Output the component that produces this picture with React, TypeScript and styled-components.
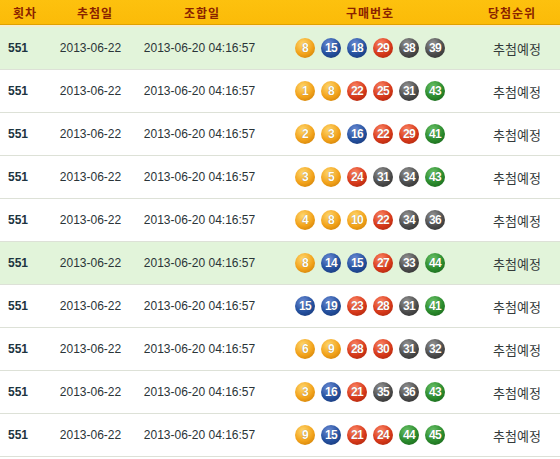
import React from "react";
import styled, { createGlobalStyle } from "styled-components";

const GlobalStyle = createGlobalStyle`
  html, body {
    margin: 0;
    padding: 0;
    background: #ffffff;
  }
  body {
    font-family: "Liberation Sans", "Noto Sans CJK KR", sans-serif;
  }
`;

// 회차 / 추첨일 / 조합일 / 구매번호 / 당첨순위
const COLS = "50px 90px 120px 220px 1fr";

const Table = styled.div`
  width: 560px;
  display: flex;
  flex-direction: column;
`;

const Header = styled.div`
  display: grid;
  grid-template-columns: ${COLS};
  align-items: center;
  height: 24px;
  background: linear-gradient(#fdc10e, #fbbb08);
  border-bottom: 1px solid #e0a100;
  box-shadow: 0 2px 0 #f4edd0;
  margin-bottom: 2px;
`;

const HeadCell = styled.div<{ $pl?: number; $pr?: number }>`
  text-align: center;
  padding-left: ${(p) => p.$pl ?? 0}px;
  padding-right: ${(p) => p.$pr ?? 0}px;
  font-family: "Noto Sans CJK KR", sans-serif;
  font-size: 12px;
  font-weight: 700;
  color: #8a2200;
  letter-spacing: 1px;
`;

const Row = styled.div<{ $hl?: boolean }>`
  display: grid;
  grid-template-columns: ${COLS};
  align-items: center;
  height: 42px;
  background: ${(p) => (p.$hl ? "#e2f4da" : "#ffffff")};
  border-bottom: 1px solid #dde1d7;
`;

const Round = styled.div`
  padding-left: 8px;
  font-size: 12px;
  font-weight: 700;
  color: #1d3440;
`;

const DateCell = styled.div<{ $pr?: number }>`
  text-align: center;
  padding-right: ${(p) => p.$pr ?? 0}px;
  font-size: 12px;
  color: #2a3438;
`;

const Balls = styled.div`
  display: flex;
  justify-content: center;
  gap: 6px;
`;

const ballColor = (n: number) => {
  if (n <= 10) return ["#ffd870", "#f2a21a", "#c27400"];
  if (n <= 20) return ["#6f8fd8", "#24509e", "#132f6a"];
  if (n <= 30) return ["#ff8a6a", "#d7391a", "#9c1f08"];
  if (n <= 40) return ["#9a9a9a", "#4c4c4c", "#272727"];
  return ["#6cc46a", "#2a8a2c", "#145a16"];
};

const Ball = styled.span<{ $n: number }>`
  width: 20px;
  height: 20px;
  border-radius: 50%;
  display: flex;
  align-items: center;
  justify-content: center;
  background: ${(p) => {
    const [a, b, c] = ballColor(p.$n);
    return `radial-gradient(circle at 40% 30%, ${a} 0%, ${b} 55%, ${c} 100%)`;
  }};
  color: #ffffff;
  font-size: 12px;
  font-weight: 700;
  letter-spacing: -0.6px;
  text-shadow: 0 0 1px rgba(0, 0, 0, 0.4);
`;

const Status = styled.div`
  text-align: center;
  padding-right: 6px;
  font-family: "Noto Sans CJK KR", sans-serif;
  font-size: 13px;
  color: #333a3a;
`;

const rows = [
  [8, 15, 18, 29, 38, 39],
  [1, 8, 22, 25, 31, 43],
  [2, 3, 16, 22, 29, 41],
  [3, 5, 24, 31, 34, 43],
  [4, 8, 10, 22, 34, 36],
  [8, 14, 15, 27, 33, 44],
  [15, 19, 23, 28, 31, 41],
  [6, 9, 28, 30, 31, 32],
  [3, 16, 21, 35, 36, 43],
  [9, 15, 21, 24, 44, 45],
];

export default function App() {
  return (
    <>
      <GlobalStyle />
      <Table>
        <Header>
          <HeadCell>횟차</HeadCell>
          <HeadCell>추첨일</HeadCell>
          <HeadCell $pl={4}>조합일</HeadCell>
          <HeadCell>구매번호</HeadCell>
          <HeadCell $pr={16}>당첨순위</HeadCell>
        </Header>
        {rows.map((nums, i) => (
          <Row key={i} $hl={i === 0 || i === 5}>
            <Round>551</Round>
            <DateCell $pr={9}>2013-06-22</DateCell>
            <DateCell $pr={1}>2013-06-20 04:16:57</DateCell>
            <Balls>
              {nums.map((n) => (
                <Ball key={n} $n={n}>
                  {n}
                </Ball>
              ))}
            </Balls>
            <Status>추첨예정</Status>
          </Row>
        ))}
      </Table>
    </>
  );
}
